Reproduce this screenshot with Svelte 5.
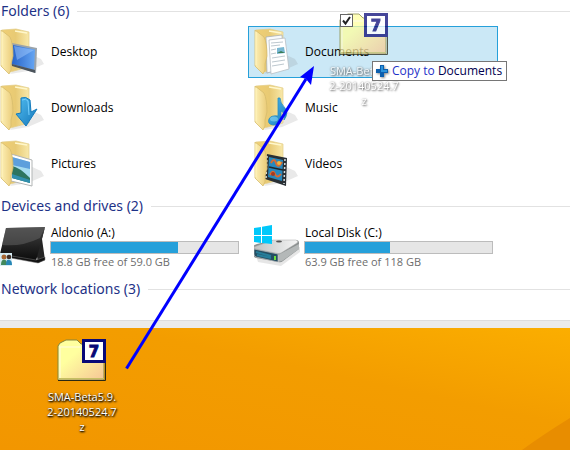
<script>
  const folders = [
    { name: 'Desktop', kind: 'desktop' },
    { name: 'Documents', kind: 'documents', selected: true },
    { name: 'Downloads', kind: 'downloads' },
    { name: 'Music', kind: 'music' },
    { name: 'Pictures', kind: 'pictures' },
    { name: 'Videos', kind: 'videos' }
  ];
  const drives = [
    { name: 'Aldonio (A:)', kind: 'tablet', used: 68, info: '18.8 GB free of 59.0 GB' },
    { name: 'Local Disk (C:)', kind: 'disk', used: 45.5, info: '63.9 GB free of 118 GB' }
  ];
  const fileLines = ['SMA-Beta5.9.', '2-20140524.7', 'z'];
  let checked = $state(true);
</script>

{#snippet folderIcon(kind)}
  <svg class="icon" viewBox="0 0 48 48" aria-hidden="true">
    <path d="M10 46L28 43L44 36L41 31L28 25Z" fill="#777" opacity=".16" />
    <path d="M2 2L16 1L29 4V39L10 44Z" fill="url(#folderBack)" stroke="#e3cd86" stroke-width=".7" />
    <path d="M15 3l12 2" stroke="#fff7cc" stroke-width="1.4" />
    {#if kind === 'desktop'}
      <path d="M12 15L37 20L36 45L11 37Z" fill="#9ba3aa" />
      <path d="M13 17L35 21.500L34 42L12 36Z" fill="url(#screen)" />
      <path d="M12 36L35 42V45L12 38Z" fill="#4c545c" />
      <path d="M14 18l20 4-17 10z" fill="#a9ceff" opacity=".45" />
    {:else if kind === 'documents'}
      <path d="M12 9L28 7L30 40L13 45Z" fill="#f8fafb" stroke="#a9b0b5" stroke-width=".8" />
      <path d="M15 12L31 10L35 41L17 46Z" fill="#fff" stroke="#b7bec4" stroke-width=".8" />
      <path d="M17 15l12-1M17 18l9-1M17 22l5-1M17 26l5-1M18 30l13-2M18 34l13-2M18 38l12-2" stroke="#bdc8cf" />
      <path d="M23 20l7-1 1 6-8 1z" fill="#78b7d2" /><path d="M23 25l4-2 4 2z" fill="#397b55" />
    {:else if kind === 'downloads'}
      <path d="M21 14Q26 12 30 16L31 28L37 25L26 42L16 30L21 29Z" fill="url(#arrowBlue)" stroke="#147bbd" />
      <path d="M22 16Q26 14 28 17L29 31" fill="none" stroke="#76d0ff" />
    {:else if kind === 'music'}
      <path d="M26 14Q26 19 31 24Q35 29 30 36Q32 29 27 27V35Q26 41 19 41Q13 40 15 35Q17 31 24 32V14Z" fill="url(#arrowBlue)" stroke="#278dbe" stroke-width=".8" />
      <ellipse cx="20" cy="35" rx="4" ry="2.500" fill="#8ed7f2" opacity=".6" />
    {:else if kind === 'pictures'}
      <path d="M11 14L32 20L32 46L11 41Z" fill="#fff" stroke="#b2b5b5" />
      <path d="M12 17L30 22V43L12 38Z" fill="#a5dbf0" />
      <path d="M12 17L30 22V29L12 25Z" fill="#5d9fdc" />
      <path d="M12 26q7 1 18 12v5l-18-5z" fill="#2d7560" />
      <path d="M12 34l18 6v3l-18-5z" fill="#318fae" />
    {:else}
      <path d="M13 14L33 18L32 46L11 39Z" fill="#292f34" />
      <path d="M15 17L29 20L28 41L14 37Z" fill="#2788bd" />
      <path d="M15 27l14 3" stroke="#20252a" stroke-width="1.500" />
      <path d="M17 23q3-6 5 0t6-1M16 35q3-6 5-1t6 0" fill="none" stroke="#d96a30" stroke-width="2" />
      <circle cx="25" cy="23" r="2" fill="#f2b43b" /><circle cx="19" cy="34" r="2" fill="#a33922" />
      <path d="M13 16L12 39M31 19L30 44" stroke="#d6dde0" stroke-width="1.500" stroke-dasharray="2 2" />
    {/if}
    <path d="M1 2L10 9Q13 15 13 28L11 36Q12 43 9 46L1 38Z" fill="url(#folderFront)" stroke="#d7bd6d" stroke-width=".8" />
    <path d="M2 4V37" stroke="#fff3bd" stroke-width="1.200" />
  </svg>
{/snippet}

{#snippet driveIcon(kind)}
  <svg class="icon" viewBox="0 0 48 48" aria-hidden="true">
    {#if kind === 'tablet'}
      <path d="M36 27L45 4L42 16L45 37L38 40Z" fill="#242424" />
      <path d="M6 5L45 4L36 38L0 31Z" fill="url(#tabletFace)" />
      <path d="M6 5L45 4L40 15Q22 24 2 22Z" fill="#666" opacity=".5" />
      <path d="M0 31L36 37L45 34V37L38 40L0 33Z" fill="#111" stroke="#777" stroke-width=".5" />
      <rect y="30" width="12" height="13" fill="#d7edf5" />
      <circle cx="4" cy="34" r="2.500" fill="#a86733" /><circle cx="9" cy="34" r="2.300" fill="#453127" />
      <path d="M1 42q0-6 4-5 2 0 2 5z" fill="#42895c" /><path d="M6 42q0-6 3-5 3 0 3 5z" fill="#2787b6" />
    {:else}
      <g transform="translate(-1 -3)">
        <path d="M2 32L5 42L28 46L47 32V27Z" fill="#777" opacity=".18" />
        <path d="M1 27Q0 25 4 24L20 20L43 20Q46 20 46 23V29L30 41Q28 43 25 42L3 38Q0 37 0 34Z" fill="#8b9090" />
        <path d="M1 27L20 20L43 20Q46 21 44 23L28 33Q26 34 22 33L3 29Q0 28 1 27Z" fill="url(#diskTop)" stroke="#aaa" stroke-width=".5" />
        <path d="M25 35L46 24V29L29 41L25 42Z" fill="#b4b8b8" />
        <path d="M1 29L25 34V42L3 37Q1 36 1 34Z" fill="#254e62" stroke="#ccc" stroke-width=".6" />
        <path d="M3 32l15 4M4 35l14 3" stroke="#267e9a" stroke-width="2" />
        <path d="M22 36v4" stroke="#6ce23d" stroke-width="2" />
        <ellipse cx="26" cy="21.500" rx="3" ry="1" fill="#555" />
        <path d="M1 8L8 7V15H1ZM9 6.800L19 5V15H9ZM1 16H8V23L1 22ZM9 16H19V24L9 23Z" fill="#00c8fa" />
      </g>
    {/if}
  </svg>
{/snippet}

{#snippet archiveIcon()}
  <svg class="archive" viewBox="0 0 50 44" aria-hidden="true">
    <path d="M1 8L3 5L9 2H20L24 6H47V42H1Z" fill="url(#archiveFace)" stroke="#85863e" />
    <path d="M2 9H24M3 41V9" stroke="#fffbe0" fill="none" />
    <path d="M2 40.500H47" stroke="#c6bf62" />
    <path d="M1 42.500H48.500V7" stroke="#292914" fill="none" />
    <rect x="26.500" y="2.500" width="21" height="21" fill="#fff" stroke="#090977" stroke-width="3" />
    <text x="37" y="19" text-anchor="middle" class="seven">7</text>
  </svg>
{/snippet}

{#snippet heading(text)}
  <h2><span>{text}</span></h2>
{/snippet}

<svg class="defs" aria-hidden="true">
  <defs>
    <linearGradient id="folderBack"><stop stop-color="#f0cf74" /><stop offset=".5" stop-color="#e8ca74" /><stop offset="1" stop-color="#f8e8a9" /></linearGradient>
    <linearGradient id="folderFront"><stop stop-color="#fdf0b6" /><stop offset="1" stop-color="#eacb78" /></linearGradient>
    <linearGradient id="screen"><stop stop-color="#2864c8" /><stop offset="1" stop-color="#65a5f3" /></linearGradient>
    <linearGradient id="arrowBlue" x1="0" x2="1" y2="1"><stop stop-color="#51bdf0" /><stop offset="1" stop-color="#1678bb" /></linearGradient>
    <linearGradient id="tabletFace" x2="0" y2="1"><stop stop-color="#424242" /><stop offset="1" stop-color="#0a0a0a" /></linearGradient>
    <linearGradient id="diskTop"><stop stop-color="#bfc2c2" /><stop offset="1" stop-color="#f5f5f5" /></linearGradient>
    <linearGradient id="archiveFace" x1="0" y1="0" x2="1" y2="1"><stop offset=".35" stop-color="#ffff9f" /><stop offset="1" stop-color="#f6c596" /></linearGradient>
  </defs>
</svg>

<main>
  <section class="explorer">
    {@render heading('Folders (6)')}
    <div class="grid folders">
      {#each folders as f}
        <button class="tile" class:selected={f.selected}>
          {@render folderIcon(f.kind)}
          <span class="label">{f.name}</span>
        </button>
      {/each}
    </div>
    {@render heading('Devices and drives (2)')}
    <div class="grid drives">
      {#each drives as d}
        <button class="tile">
          {@render driveIcon(d.kind)}
          <span class="details">
            <span class="label">{d.name}</span>
            <span class="meter" role="meter" aria-label="Used space" aria-valuemin="0" aria-valuemax="100" aria-valuenow={d.used}>
              <span class="fill" style="width: {d.used}%"></span>
            </span>
            <span class="label info">{d.info}</span>
          </span>
        </button>
      {/each}
    </div>
    {@render heading('Network locations (3)')}
  </section>
  <div class="edge"></div>
  <section class="wallpaper">
    <svg class="facet" viewBox="0 0 48 32" aria-hidden="true"><path d="M48 0V32H0Q22 16 48 0Z" fill="#e88d00" /></svg>
    <button class="file">
      {@render archiveIcon()}
      <span class="name">{#each fileLines as line}<span>{line}</span>{/each}</span>
    </button>
  </section>

  <div class="file ghost">
    {@render archiveIcon()}
    <span class="name">{#each fileLines as line}<span>{line}</span>{/each}</span>
  </div>
  <label class="check">
    <input type="checkbox" bind:checked aria-label="Select file" />
    <svg viewBox="0 0 13 13" aria-hidden="true">{#if checked}<path d="M3 6.500L5.500 9.500L10 3" />{/if}</svg>
  </label>
  <svg class="arrow" viewBox="0 0 570 450" aria-hidden="true">
    <path d="M126.500 368.500L306 79" stroke="#00f" stroke-width="3" />
    <path d="M314 66L300 77L306 79L311 85Z" fill="#00f" />
  </svg>
  <div class="tooltip" role="tooltip">
    <svg viewBox="0 0 12 12" aria-hidden="true"><path d="M4 0H8V4H12V8H8V12H4V8H0V4H4Z" fill="#0c5fae" /><path d="M5 1H7V5H11V7H5Z" fill="#2b93dc" /></svg>
    <span>Copy to <b>Documents</b></span>
  </div>
</main>

<style>
  :global(body) { margin: 0; background: #fff; }
  main {
    position: relative;
    display: flex;
    flex-direction: column;
    min-height: 100vh;
    overflow: hidden;
    font: 12px/16px "Open Sans", "Noto Sans", sans-serif;
    color: #000;
  }
  .defs { position: absolute; width: 0; height: 0; }
  .explorer { background: #fff; padding-bottom: 20px; }
  h2 {
    display: flex;
    align-items: center;
    gap: 8px;
    margin: 0;
    padding-left: 1px;
    font-family: "Noto Sans", sans-serif;
    font-size: 14px;
    font-weight: 400;
    line-height: 22px;
    color: #1e3287;
  }
  h2::after { content: ""; flex: 1; height: 1px; background: #e2e2e2; }
  button { border: 0; background: none; padding: 0; font: inherit; color: inherit; }
  .grid { display: grid; grid-template-columns: 250px 250px; column-gap: 4px; margin-left: -6px; padding: 4px 0 5px; }
  .folders { row-gap: 4px; }
  .tile {
    box-sizing: border-box;
    display: flex;
    align-items: center;
    gap: 2px;
    height: 52px;
    padding: 0 4px 0 5px;
    border: 1px solid transparent;
    text-align: left;
  }
  .selected { background: #cbe8f6; border-color: #26a0da; }
  .icon { flex: none; width: 48px; height: 48px; }
  .details { display: flex; flex-direction: column; width: 189px; }
  .label { padding-left: 1px; }
  .info { font-size: 11px; color: #6d6d6d; }
  .meter { box-sizing: border-box; height: 13px; border: 1px solid #bcbcbc; background: #e6e6e6; }
  .fill { display: block; height: 100%; background: #26a0da; }
  .edge { height: 8px; background: #ebebeb; border-top: 1px solid #ddd; box-sizing: border-box; }
  .wallpaper {
    position: relative;
    flex: 1;
    padding: 10px 44px 0;
    background: linear-gradient(to top right, #f29600, #f39d00 60%, #fbae00);
  }
  .facet { position: absolute; right: 0; bottom: 0; width: 48px; height: 32px; }
  .file { display: flex; flex-direction: column; align-items: center; gap: 7px; width: 76px; }
  .archive { width: 50px; height: 44px; }
  .seven { font: bold 15px "DejaVu Sans", sans-serif; fill: #090977; stroke: #090977; }
  .name { display: flex; flex-direction: column; align-items: center; font-size: 11px; line-height: 15px; color: #fff; text-shadow: 1px 1px 2px #000, 0 1px 2px #000; }
  .ghost { position: absolute; left: 326px; top: 12px; opacity: .75; }
  .ghost .name { text-shadow: 1px 1px 2px #444, 0 0 2px #666; }
  .check { position: absolute; left: 340px; top: 14px; width: 13px; height: 13px; }
  .check input { appearance: none; display: block; box-sizing: border-box; width: 13px; height: 13px; margin: 0; border: 1px solid #666; background: #fff; }
  .check svg { position: absolute; inset: 0; fill: none; stroke: #222; stroke-width: 2; }
  .arrow { position: absolute; left: 0; top: 0; width: 570px; height: 450px; pointer-events: none; }
  .tooltip {
    position: absolute;
    left: 372px;
    top: 61px;
    box-sizing: border-box;
    display: flex;
    align-items: center;
    gap: 4px;
    height: 20px;
    padding: 0 4px 0 3px;
    border: 1px solid #767676;
    background: #fff;
    color: #1e32c8;
    white-space: nowrap;
  }
  .tooltip svg { width: 12px; height: 12px; filter: drop-shadow(1px 1px 1px #888); }
  .tooltip b { font-weight: 400; color: #000050; }
</style>
